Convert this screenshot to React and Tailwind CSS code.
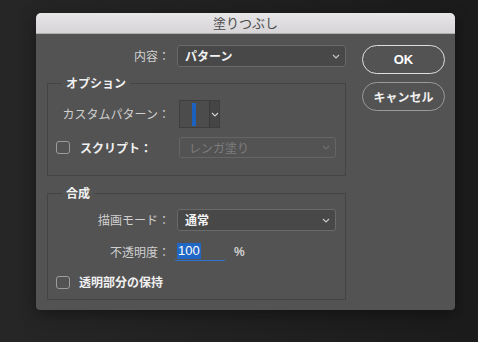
const Chevron = ({ color = '#c8c8c8' }) => (
  <svg width="8" height="5" viewBox="0 0 8 5" fill="none">
    <path d="M1 1l3 3 3-3" stroke={color} strokeWidth="1.1" />
  </svg>
);

const Checkbox = () => (
  <div className="w-[14px] h-[13px] rounded-[3px] border border-[#9c9c9c]" />
);

export default function App() {
  return (
    <div className="w-[478px] h-[342px] bg-gradient-to-r from-[#262626] to-[#1b1b1b] pt-[13px] pl-[36px] font-['Noto_Sans_CJK_JP',sans-serif] text-[12px] leading-[16px]">
      <div className="w-[419px] h-[297px] rounded-t-[5px] rounded-b-[4px] bg-[#535353] overflow-hidden flex flex-col shadow-[0_4px_16px_rgba(0,0,0,0.4)]">
        <div className="h-[21px] shrink-0 bg-gradient-to-b from-[#e8e6e8] to-[#d6d4d6] border-b border-[#b0b0b0] flex items-center justify-center text-[13px] text-[#4a4a4a]">
          塗りつぶし
        </div>

        <div className="flex pl-[11px] pt-[11px]">
          <div className="w-[299px]">
            <div className="flex items-center h-[22px]">
              <div className="w-[130px] pr-[7px] text-right text-[#d2d2d2]">内容：</div>
              <div className="w-[169px] h-[22px] rounded-[3px] bg-[#484848] border border-[#6a6a6a] flex items-center justify-between pl-[7px] pr-[5px] text-[#f2f2f2] font-bold">
                <span>パターン</span>
                <Chevron />
              </div>
            </div>

            <fieldset className="mt-[8px] border border-[#444444] pb-[17px]">
              <legend className="ml-[14px] px-[4px] font-bold text-[#f0f0f0] leading-[16px]">オプション</legend>
              <div className="flex items-center mt-[9px]">
                <div className="w-[122px] text-right text-[#cfcfcf]">カスタムパターン：</div>
                <div className="ml-[9px] w-[41px] h-[28px] border border-[#3e3e3e] flex">
                  <div className="w-[29px] bg-[#4c4c4c] flex items-center pl-[12px]">
                    <div className="w-[4px] h-[23px] bg-gradient-to-b from-[#1d63c4] via-[#1a5fb8] to-[#1d63c4]" />
                  </div>
                  <div className="flex-1 bg-[#454545] border-l border-[#3a3a3a] flex items-center justify-center">
                    <Chevron color="#d0d0d0" />
                  </div>
                </div>
              </div>
              <div className="flex items-center mt-[9px] h-[21px]">
                <div className="w-[131px] pl-[8px] flex items-center">
                  <Checkbox />
                  <span className="ml-[10px] font-bold text-[#f0f0f0]">スクリプト：</span>
                </div>
                <div className="w-[157px] h-[21px] rounded-[3px] border border-[#656565] flex items-center justify-between pl-[9px] pr-[5px] text-[#7c7c7c]">
                  <span>レンガ塗り</span>
                  <Chevron color="#6e6e6e" />
                </div>
              </div>
            </fieldset>

            <fieldset className="mt-[9px] border border-[#444444] pb-[9px]">
              <legend className="ml-[14px] px-[4px] font-bold text-[#f0f0f0] leading-[16px]">合成</legend>
              <div className="flex items-center mt-[8px]">
                <div className="w-[122px] text-right text-[#cfcfcf]">描画モード：</div>
                <div className="ml-[7px] w-[159px] h-[22px] rounded-[3px] bg-[#484848] border border-[#6a6a6a] flex items-center justify-between pl-[7px] pr-[5px] text-[#f2f2f2] font-bold">
                  <span>通常</span>
                  <Chevron />
                </div>
              </div>
              <div className="flex items-center mt-[12px] h-[18px]">
                <div className="w-[122px] text-right text-[#cfcfcf]">不透明度：</div>
                <div className="ml-[5px] w-[50px] h-[18px] border-b border-[#2f74d0] pl-[2px] flex items-start">
                  <span className="bg-[#2168c6] text-white h-[16px] px-[1px] font-['Liberation_Sans',sans-serif] text-[13px] leading-[16px]">100</span>
                </div>
                <span className="ml-[9px] text-[#d0d0d0] font-bold font-['Liberation_Sans',sans-serif]">%</span>
              </div>
              <div className="flex items-center mt-[13px] pl-[8px]">
                <Checkbox />
                <span className="ml-[9px] font-bold text-[#f0f0f0]">透明部分の保持</span>
              </div>
            </fieldset>
          </div>

          <div className="ml-[16px] flex flex-col gap-[8px]">
            <button className="w-[83px] h-[29px] rounded-full border-[1.5px] border-[#dedede] text-white font-bold text-[13px] font-['Liberation_Sans',sans-serif]">
              OK
            </button>
            <button className="w-[83px] h-[29px] rounded-full border border-[#9a9a9a] text-[#f0f0f0] font-bold text-[12px]">
              キャンセル
            </button>
          </div>
        </div>
      </div>
    </div>
  );
}
